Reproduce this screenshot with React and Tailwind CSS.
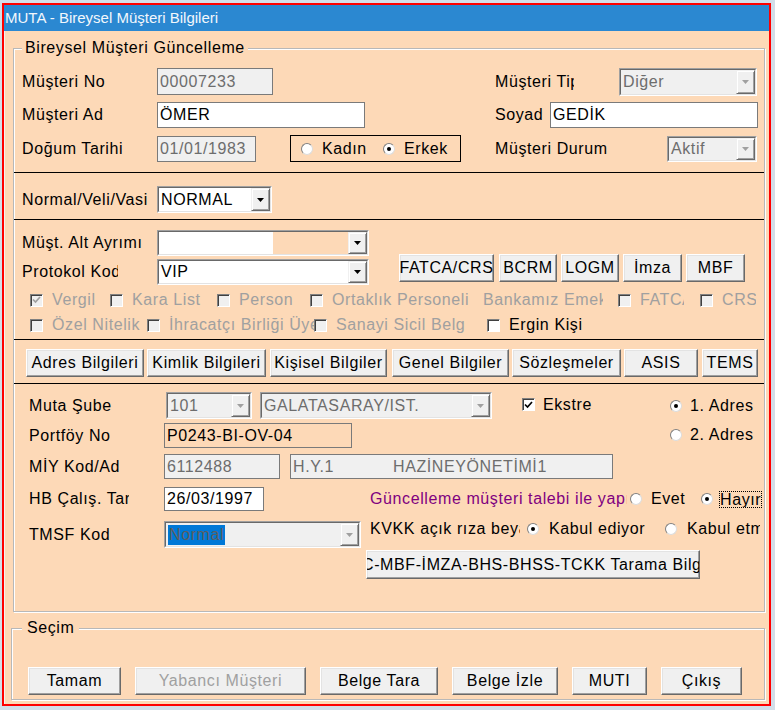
import React from 'react';

const Tri = ({ dim }) => (
  <svg width="7" height="4" viewBox="0 0 7 4">
    <path d="M0 0h7L3.5 4z" fill={dim ? '#a0a0a0' : '#000'} />
  </svg>
);

const DropBtn = ({ dim }) => (
  <span className="w-[19px] shrink-0 flex items-center justify-center bg-[#f0f0f0] border border-t-[#f0f0f0] border-l-[#f0f0f0] border-r-[#696969] border-b-[#696969] shadow-[inset_1px_1px_0_white,inset_-1px_-1px_0_#a0a0a0]">
    <Tri dim={dim} />
  </span>
);

const Combo = ({ cls, value, disabled, children }) => (
  <div className={`shrink-0 flex border border-t-[#a0a0a0] border-l-[#a0a0a0] border-r-white border-b-white ${cls}`}>
    <div
      className={`flex-1 flex border border-t-[#696969] border-l-[#696969] border-r-[#e3e3e3] border-b-[#e3e3e3] overflow-hidden ${
        disabled ? 'bg-[#f0f0f0] text-[#6d6d6d]' : 'bg-white text-black'
      }`}
    >
      <span className="flex-1 flex items-center whitespace-nowrap overflow-hidden">
        {children || <span className="pl-[2px]">{value}</span>}
      </span>
      <DropBtn dim={disabled} />
    </div>
  </div>
);

const TextBox = ({ cls, children }) => (
  <div className={`shrink-0 flex items-center pl-[2px] whitespace-nowrap overflow-hidden border border-[#7a7a7a] ${cls}`}>
    {children}
  </div>
);

const Btn = ({ cls, disabled, children }) => (
  <button
    type="button"
    className={`shrink-0 flex items-center justify-center whitespace-nowrap overflow-hidden bg-[#f0f0f0] border border-t-white border-l-white border-r-[#696969] border-b-[#696969] shadow-[inset_-1px_-1px_0_#a0a0a0,inset_1px_1px_0_#e3e3e3] ${
      disabled ? 'text-[#a0a0a0]' : 'text-black'
    } ${cls}`}
  >
    {children}
  </button>
);

const Check = ({ checked, disabled }) => (
  <span
    className={`w-[13px] h-[13px] shrink-0 flex items-center justify-center border border-t-[#808080] border-l-[#808080] border-r-white border-b-white shadow-[inset_1px_1px_0_#404040] ${
      disabled ? 'bg-[#f0f0f0]' : 'bg-white'
    }`}
  >
    {checked && (
      <svg width="9" height="8" viewBox="0 0 9 8">
        <path d="M1 3.5l2.5 2.5L8 1" stroke={disabled ? '#a0a0a0' : '#000'} strokeWidth="1.7" fill="none" />
      </svg>
    )}
  </span>
);

const Radio = ({ on }) => (
  <span className="w-[12px] h-[12px] shrink-0 rounded-full bg-white border border-t-[#808080] border-l-[#808080] border-r-[#dcdcdc] border-b-[#dcdcdc] flex items-center justify-center">
    {on && <span className="w-[4px] h-[4px] rounded-full bg-black" />}
  </span>
);

const CbItem = ({ cls, tcls = '', checked, disabled, text }) => (
  <span className={`shrink-0 flex items-center ${cls}`}>
    <Check checked={checked} disabled={disabled} />
    <span className={`ml-[9px] whitespace-nowrap overflow-hidden ${tcls}`}>{text}</span>
  </span>
);

const Sep = ({ cls }) => <div className={`h-px bg-black ${cls}`} />;

const Label = ({ cls, clip, children }) => (
  <span className={`shrink-0 whitespace-nowrap ${cls}`}>
    {clip ? <span className={`block overflow-hidden ${clip}`}>{children}</span> : children}
  </span>
);

export default function App() {
  return (
    <div className="w-[775px] h-[710px] bg-[#d3dee9] pt-[3px] pl-[2px] font-['Liberation_Sans',Arial,sans-serif] text-[16px] leading-[18px] tracking-[0.6px] text-black overflow-hidden">
      <div className="w-[769px] h-[703px] border-2 border-[#ff0000] flex flex-col">
        {/* title bar */}
        <div className="h-[26px] shrink-0 bg-[#2b88d1] flex items-center pl-[1px] text-[15px] tracking-normal text-[#f2f7fc]">
          MUTA - Bireysel Müşteri Bilgileri
        </div>

        <div className="flex-1 bg-[#fdd9b7] border-l border-l-[#f3f3f3]">
          {/* Bireysel Müşteri Güncelleme */}
          <div className="relative mt-[17px] ml-[8px] w-[752px] h-[564px] border border-[#b8b8b8] shadow-[1px_1px_0_white,inset_1px_1px_0_white]">
            <span className="absolute -top-[10px] left-[8px] px-[3px] bg-[#fdd9b7]">Bireysel Müşteri Güncelleme</span>

            <div className="flex items-center h-[27px] mt-[19px]">
              <Label cls="ml-[8px] w-[135px]">Müşteri No</Label>
              <TextBox cls="w-[116px] h-[27px] bg-[#f0f0f0] text-[#6d6d6d]">00007233</TextBox>
              <Label cls="ml-[222px] w-[79px]" clip="w-[79px]">Müşteri Tipi</Label>
              <Combo cls="ml-[45px] w-[138px] h-[28px]" disabled value="Diğer" />
            </div>

            <div className="flex items-center h-[26px] mt-[7px]">
              <Label cls="ml-[8px] w-[135px]">Müşteri Ad</Label>
              <TextBox cls="w-[208px] h-[26px] bg-white">ÖMER</TextBox>
              <Label cls="ml-[130px] w-[55px]">Soyad</Label>
              <TextBox cls="w-[208px] h-[26px] bg-white">GEDİK</TextBox>
            </div>

            <div className="flex items-center h-[27px] mt-[7px]">
              <Label cls="ml-[8px] w-[135px]">Doğum Tarihi</Label>
              <TextBox cls="w-[99px] h-[26px] bg-[#f0f0f0] text-[#6d6d6d]">01/01/1983</TextBox>
              <div className="ml-[34px] w-[171px] h-[27px] shrink-0 border border-black flex items-center pl-[10px]">
                <span className="w-[82px] flex items-center">
                  <Radio />
                  <span className="ml-[9px]">Kadın</span>
                </span>
                <Radio on />
                <span className="ml-[9px]">Erkek</span>
              </div>
              <Label cls="ml-[34px] w-[172px]">Müşteri Durum</Label>
              <Combo cls="w-[90px] h-[26px]" disabled value="Aktif" />
            </div>

            <Sep cls="mt-[10px]" />

            <div className="flex items-center h-[27px] mt-[13px]">
              <Label cls="ml-[8px] w-[135px]">Normal/Veli/Vasi</Label>
              <Combo cls="w-[115px] h-[27px]" value="NORMAL" />
            </div>

            <Sep cls="mt-[6px]" />

            <div className="flex mt-[10px]">
              <div className="flex flex-col">
                <div className="flex items-center h-[26px]">
                  <Label cls="ml-[8px] w-[135px]">Müşt. Alt Ayrımı</Label>
                  <Combo cls="w-[212px] h-[26px]">
                    <span className="w-[114px] self-stretch bg-white" />
                    <span className="flex-1 self-stretch bg-[#fdd9b7]" />
                  </Combo>
                </div>
                <div className="flex items-center h-[26px] mt-[3px]">
                  <Label cls="ml-[8px] w-[135px]" clip="w-[96px]">Protokol Kodu</Label>
                  <Combo cls="w-[212px] h-[26px]" value="VIP" />
                </div>
              </div>
              <div className="flex ml-[30px] mt-[24px] h-[28px]">
                <Btn cls="w-[95px] h-[28px]">FATCA/CRS</Btn>
                <Btn cls="ml-[5px] w-[58px] h-[28px]">BCRM</Btn>
                <Btn cls="ml-[4px] w-[58px] h-[28px]">LOGM</Btn>
                <Btn cls="ml-[4px] w-[59px] h-[28px]">İmza</Btn>
                <Btn cls="ml-[4px] w-[59px] h-[28px]">MBF</Btn>
              </div>
            </div>

            <div className="flex items-center h-[16px] mt-[7px] pl-[16px] text-[#a0a0a0]">
              <CbItem cls="w-[80px]" checked disabled text="Vergil" />
              <CbItem cls="w-[107px]" disabled text="Kara List" />
              <CbItem cls="w-[93px]" disabled text="Person" />
              <CbItem cls="w-[173px]" disabled text="Ortaklık Personeli" />
              <span className="w-[135px] shrink-0">
                <span className="block w-[120px] overflow-hidden whitespace-nowrap">Bankamız Emekli</span>
              </span>
              <CbItem cls="w-[82px]" tcls="w-[44px]" disabled text="FATCA" />
              <CbItem cls="w-[56px]" disabled text="CRS" />
            </div>

            <div className="flex items-center h-[16px] mt-[9px] pl-[16px] text-[#a0a0a0]">
              <CbItem cls="w-[117px]" disabled text="Özel Nitelik" />
              <CbItem cls="w-[167px]" tcls="w-[145px]" disabled text="İhracatçı Birliği Üyesi" />
              <CbItem cls="w-[173px]" tcls="w-[129px]" disabled text="Sanayi Sicil Belgesi" />
              <CbItem cls="text-black" text="Ergin Kişi" />
            </div>

            <Sep cls="mt-[6px]" />

            <div className="flex mt-[9px] pl-[12px] h-[28px]">
              <Btn cls="w-[118px] h-[28px]">Adres Bilgileri</Btn>
              <Btn cls="ml-[3px] w-[119px] h-[28px]">Kimlik Bilgileri</Btn>
              <Btn cls="ml-[4px] w-[117px] h-[28px]">Kişisel Bilgiler</Btn>
              <Btn cls="ml-[5px] w-[117px] h-[28px]">Genel Bilgiler</Btn>
              <Btn cls="ml-[3px] w-[109px] h-[28px]">Sözleşmeler</Btn>
              <Btn cls="ml-[3px] w-[74px] h-[28px]">ASIS</Btn>
              <Btn cls="ml-[4px] w-[56px] h-[28px]">TEMS</Btn>
            </div>

            <Sep cls="mt-[6px]" />

            <div className="flex items-center h-[27px] mt-[8px]">
              <Label cls="ml-[15px] w-[137px]">Muta Şube</Label>
              <Combo cls="w-[86px] h-[27px]" disabled value="101" />
              <Combo cls="ml-[8px] w-[232px] h-[27px]" disabled value="GALATASARAY/IST." />
              <span className="ml-[30px] w-[148px] shrink-0 flex items-center -mt-[2px]">
                <Check checked />
                <span className="ml-[8px]">Ekstre</span>
              </span>
              <Radio on />
              <span className="ml-[8px] whitespace-nowrap">1. Adres</span>
            </div>

            <div className="flex items-center h-[25px] mt-[4px]">
              <Label cls="ml-[15px] w-[135px]">Portföy No</Label>
              <TextBox cls="w-[188px] h-[25px]">P0243-BI-OV-04</TextBox>
              <span className="ml-[318px] flex items-center -mt-[2px]">
                <Radio />
                <span className="ml-[8px] whitespace-nowrap">2. Adres</span>
              </span>
            </div>

            <div className="flex items-center h-[25px] mt-[6px]">
              <Label cls="ml-[15px] w-[135px]">MİY Kod/Ad</Label>
              <TextBox cls="w-[116px] h-[25px] bg-[#f0f0f0] text-[#6d6d6d]">6112488</TextBox>
              <TextBox cls="ml-[10px] w-[323px] h-[25px] bg-[#f0f0f0] text-[#6d6d6d]">
                <span className="w-[100px] shrink-0">H.Y.1</span>
                <span>HAZİNEYÖNETİMİ1</span>
              </TextBox>
            </div>

            <div className="flex items-center h-[24px] mt-[8px]">
              <Label cls="ml-[15px] w-[135px]" clip="w-[100px]">HB Çalış. Tarihi</Label>
              <TextBox cls="w-[100px] h-[24px] bg-white">26/03/1997</TextBox>
              <span className="ml-[106px] mr-[3px] w-[257px] shrink-0 overflow-hidden whitespace-nowrap text-[#800080]">
                Güncelleme müşteri talebi ile yapılmıştır
              </span>
              <span className="w-[71px] shrink-0 flex items-center">
                <Radio />
                <span className="ml-[9px]">Evet</span>
              </span>
              <Radio on />
              <span className="ml-[6px] w-[43px] h-[17px] overflow-hidden whitespace-nowrap border border-dotted border-black leading-[15px]">
                Hayır
              </span>
            </div>

            <div className="flex items-start mt-[9px]">
              <div className="flex items-center h-[27px] mt-[1px]">
                <Label cls="ml-[15px] w-[135px]">TMSF Kod</Label>
                <Combo cls="w-[197px] h-[27px]" disabled>
                  <span className="ml-[2px] px-[1px] h-[20px] flex items-center bg-[#0078d7] text-[#5e5e5e]">Normal</span>
                </Combo>
              </div>
              <div className="flex flex-col ml-[5px]">
                <div className="flex items-center h-[18px] pl-[4px]">
                  <span className="w-[150px] mr-[7px] shrink-0 overflow-hidden whitespace-nowrap">KVKK açık rıza beyanı</span>
                  <span className="w-[138px] shrink-0 flex items-center">
                    <Radio on />
                    <span className="ml-[10px] whitespace-nowrap">Kabul ediyor</span>
                  </span>
                  <Radio />
                  <span className="ml-[10px] w-[73px] overflow-hidden whitespace-nowrap">Kabul etmiyor</span>
                </div>
                <Btn cls="mt-[12px] w-[334px] h-[29px] !justify-start">
                  <span className="-ml-[5px]">C-MBF-İMZA-BHS-BHSS-TCKK Tarama Bilgileri</span>
                </Btn>
              </div>
            </div>
          </div>

          {/* Seçim */}
          <div className="relative mt-[16px] ml-[6px] w-[754px] h-[72px] border border-[#b8b8b8] shadow-[1px_1px_0_white,inset_1px_1px_0_white]">
            <span className="absolute -top-[10px] left-[10px] px-[5px] bg-[#fdd9b7]">Seçim</span>
            <div className="flex mt-[38px] ml-[16px] gap-[14px]">
              <Btn cls="w-[93px] h-[28px]">Tamam</Btn>
              <Btn cls="w-[171px] h-[28px]" disabled>Yabancı Müşteri</Btn>
              <Btn cls="w-[118px] h-[28px]">Belge Tara</Btn>
              <Btn cls="w-[106px] h-[28px]">Belge İzle</Btn>
              <Btn cls="w-[75px] h-[28px]">MUTI</Btn>
              <Btn cls="w-[81px] h-[28px]">Çıkış</Btn>
            </div>
          </div>
        </div>
      </div>
    </div>
  );
}
